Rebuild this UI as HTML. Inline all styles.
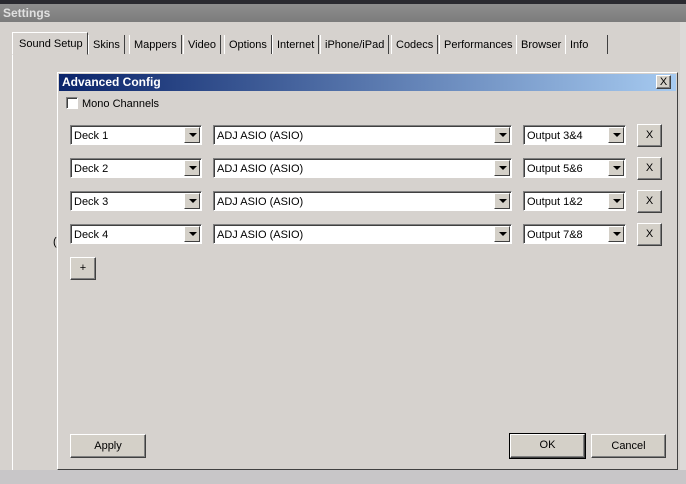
<!DOCTYPE html>
<html><head><style>
*{box-sizing:border-box;margin:0;padding:0}
body{width:686px;height:484px;overflow:hidden;background:#d6d2ce;font-family:"Liberation Sans",sans-serif;font-size:11px;position:relative;color:#000}
.abs{position:absolute}
.combo{position:absolute;height:20px;background:#fff;border:1px solid;border-color:#808080 #fff #fff #808080;box-shadow:inset 1px 1px 0 #404040;padding:4px 0 0 3px;font-size:11px}
.combo .arr{position:absolute;right:1px;top:1px;width:16px;height:16px;background:#d4d0c8;border:1px solid;border-color:#fff #404040 #404040 #fff}
.combo .arr:after{content:"";position:absolute;left:4px;top:5px;border-left:4px solid transparent;border-right:4px solid transparent;border-top:4px solid #000}
.btn{position:absolute;background:#d4d0c8;border:1px solid;border-color:#fff #404040 #404040 #fff;box-shadow:inset -1px -1px 0 #808080;text-align:center;font-size:11px}
.tab{position:absolute;top:35px;height:19px;border-right:1px solid #404040;border-left:1px solid #fff;padding:4px 4px 0 4px;font-size:11px}
</style></head><body>
<div class="abs" style="left:0;top:0;width:686px;height:4px;background:#2a2a30"></div>
<div class="abs" style="left:0;top:4px;width:686px;height:18px;background:linear-gradient(#8e8e8e,#7c7c7c);color:#e0e0e0;font-weight:bold;font-size:12px;padding:2px 0 0 3px">Settings</div>
<div class="abs" style="left:12px;top:54px;width:2px;height:430px;border-left:1px solid #fff"></div>
<div class="abs" style="left:12px;top:32px;width:76px;height:23px;background:#d6d2ce;border:1px solid;border-color:#fff #404040 transparent #fff;padding:5px 0 0 6px;font-size:11px">Sound Setup</div>
<div class="tab" style="left:88px">Skins</div>
<div class="tab" style="left:129px">Mappers</div>
<div class="tab" style="left:183px">Video</div>
<div class="tab" style="left:224px">Options</div>
<div class="tab" style="left:272px">Internet</div>
<div class="tab" style="left:320px">iPhone/iPad</div>
<div class="tab" style="left:391px">Codecs</div>
<div class="tab" style="left:439px">Performances</div>
<div class="tab" style="left:516px">Browser</div>
<div class="tab" style="left:565px;width:43px">Info</div>
<div class="abs" style="left:53px;top:236px">(</div>
<div class="abs" style="left:57px;top:72px;width:621px;height:398px;background:#d6d2ce;border:1px solid;border-color:#fff #404040 #404040 #fff"></div>
<div class="abs" style="left:59px;top:74px;width:617px;height:17px;background:linear-gradient(90deg,#0a246a,#a6caf0);color:#fff;font-weight:bold;font-size:12px;padding:1px 0 0 3px">Advanced Config</div>
<div class="btn" style="left:656px;top:75px;width:15px;height:14px;font-size:11px;line-height:12px">X</div>
<div class="abs" style="left:66px;top:97px;width:12px;height:12px;background:#fff;border:1px solid;border-color:#808080 #fff #fff #808080;box-shadow:inset 1px 1px 0 #404040"></div>
<div class="abs" style="left:82px;top:98px">Mono Channels</div>

<div class="combo" style="left:70px;top:125px;width:132px">Deck 1<div class="arr"></div></div>
<div class="combo" style="left:213px;top:125px;width:299px">ADJ ASIO (ASIO)<div class="arr"></div></div>
<div class="combo" style="left:523px;top:125px;width:103px">Output 3&amp;4<div class="arr"></div></div>
<div class="btn" style="left:637px;top:124px;width:25px;height:23px;line-height:21px">X</div>

<div class="combo" style="left:70px;top:158px;width:132px">Deck 2<div class="arr"></div></div>
<div class="combo" style="left:213px;top:158px;width:299px">ADJ ASIO (ASIO)<div class="arr"></div></div>
<div class="combo" style="left:523px;top:158px;width:103px">Output 5&amp;6<div class="arr"></div></div>
<div class="btn" style="left:637px;top:157px;width:25px;height:23px;line-height:21px">X</div>

<div class="combo" style="left:70px;top:191px;width:132px">Deck 3<div class="arr"></div></div>
<div class="combo" style="left:213px;top:191px;width:299px">ADJ ASIO (ASIO)<div class="arr"></div></div>
<div class="combo" style="left:523px;top:191px;width:103px">Output 1&amp;2<div class="arr"></div></div>
<div class="btn" style="left:637px;top:190px;width:25px;height:23px;line-height:21px">X</div>

<div class="combo" style="left:70px;top:224px;width:132px">Deck 4<div class="arr"></div></div>
<div class="combo" style="left:213px;top:224px;width:299px">ADJ ASIO (ASIO)<div class="arr"></div></div>
<div class="combo" style="left:523px;top:224px;width:103px">Output 7&amp;8<div class="arr"></div></div>
<div class="btn" style="left:637px;top:223px;width:25px;height:23px;line-height:21px">X</div>

<div class="btn" style="left:70px;top:257px;width:26px;height:23px;line-height:21px">+</div>
<div class="btn" style="left:70px;top:434px;width:76px;height:24px;line-height:22px">Apply</div>
<div class="btn" style="left:510px;top:434px;width:75px;height:24px;line-height:21px;outline:1px solid #000">OK</div>
<div class="btn" style="left:591px;top:434px;width:75px;height:24px;line-height:22px">Cancel</div>
<div class="abs" style="left:0;top:470px;width:686px;height:14px;background:#c8c6c8"></div>
<div class="abs" style="left:680px;top:22px;width:6px;height:448px;background:#dcdad8"></div>
</body></html>
